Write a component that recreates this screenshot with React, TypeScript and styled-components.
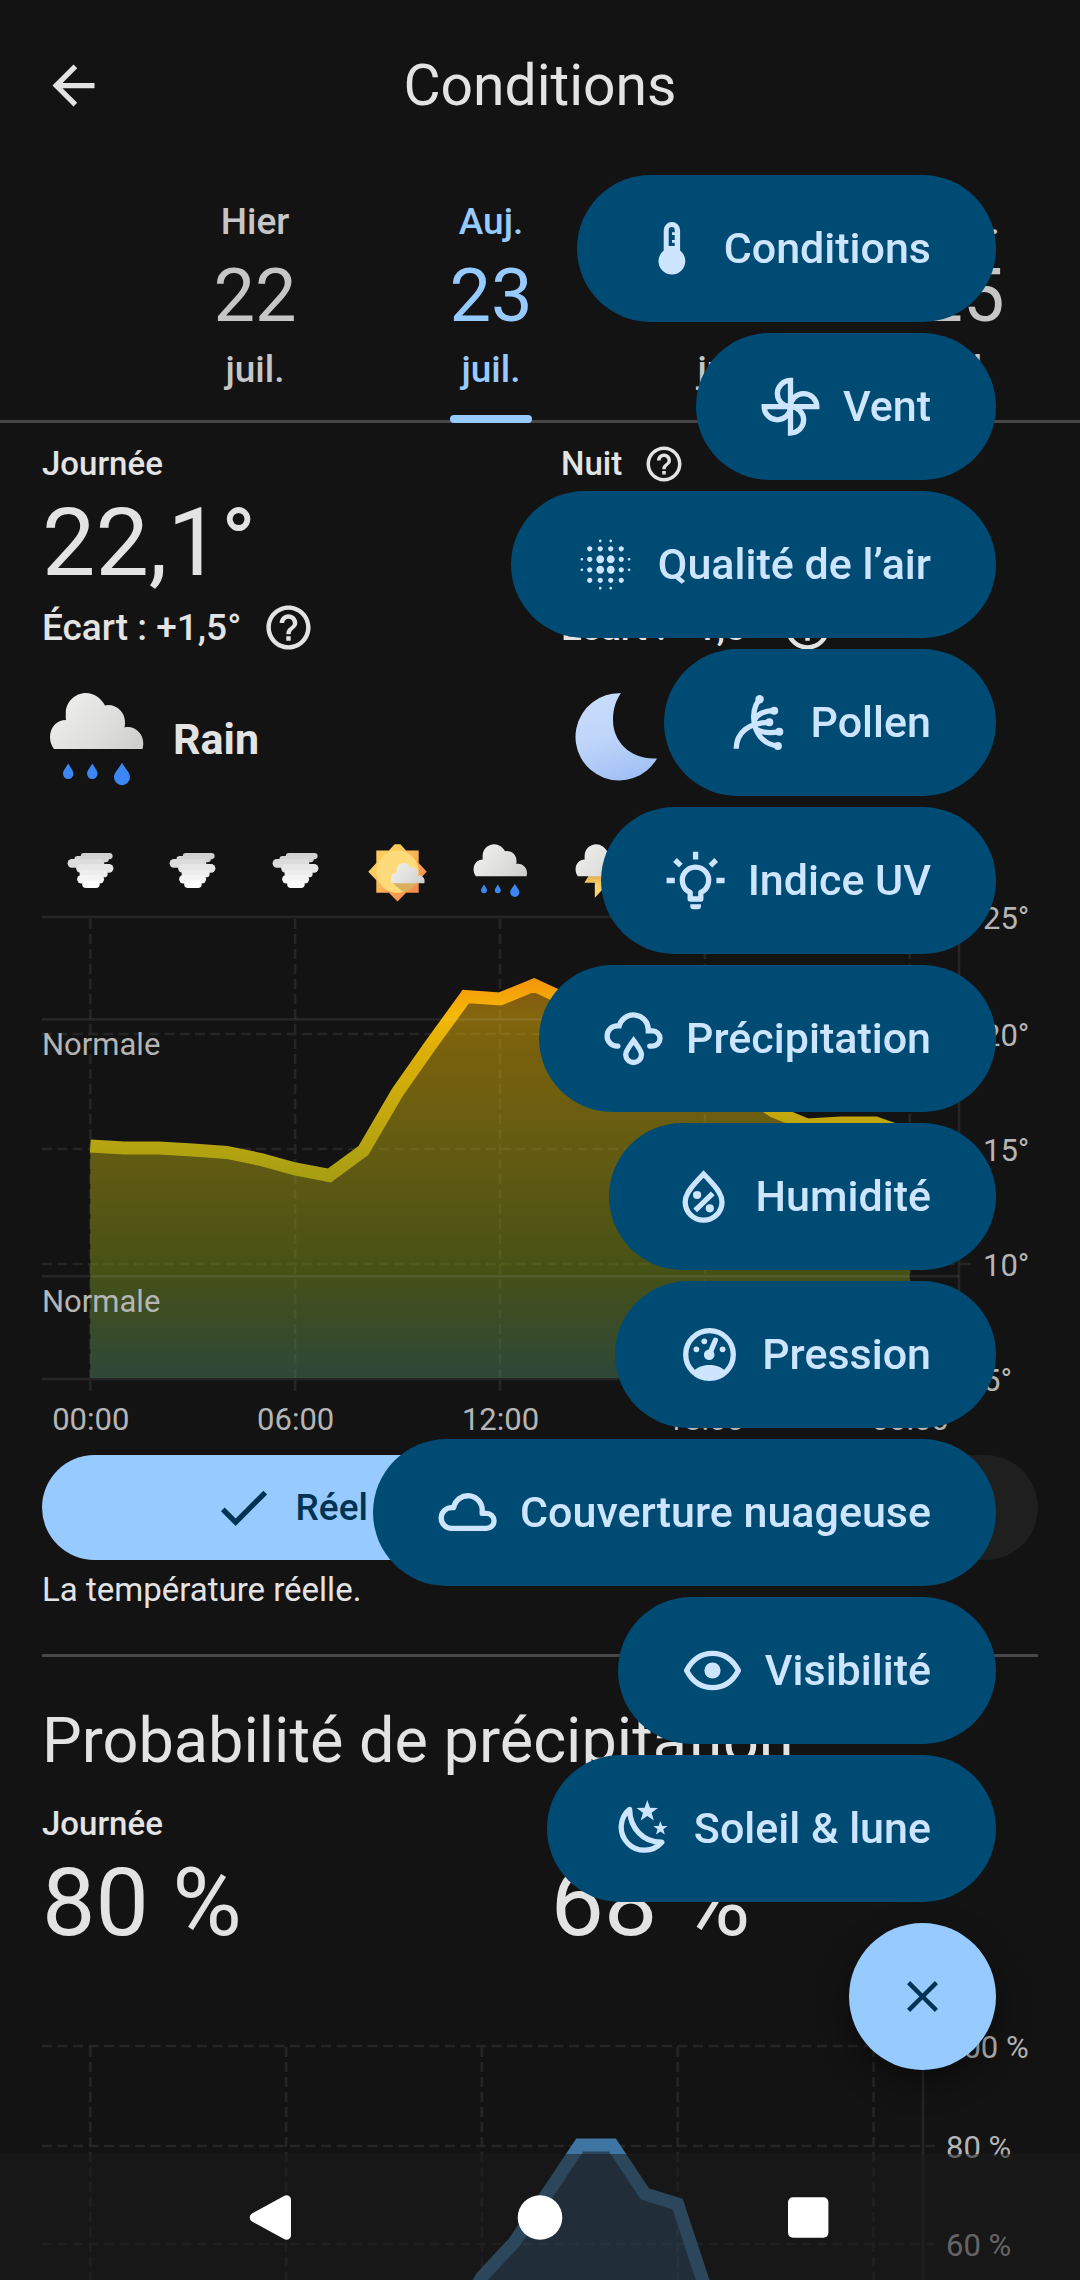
import React, { useState } from "react";
import styled, { createGlobalStyle } from "styled-components";
import { MdArrowBack, MdBlurOn, MdCheck, MdClose, MdHelpOutline } from "react-icons/md";

const color = {
  surface: "#131313",
  surfaceHigh: "#1f1f1f",
  text: "#e3e3e3",
  muted: "#c6c6c6",
  axis: "#b5b5b5",
  outline: "#474747",
  primary: "#97caff",
  onPrimary: "#003352",
  container: "#004b74",
  onContainer: "#cde5ff",
};

const GlobalStyle = createGlobalStyle`
  * { box-sizing: border-box; }
  body {
    margin: 0;
    background: ${color.surface};
    color: ${color.text};
    font-family: Roboto, "Noto Sans", sans-serif;
  }
  button { font-family: inherit; border: 0; padding: 0; background: none; color: inherit; cursor: pointer; }
  h1, h2, p { margin: 0; font-weight: 400; }
`;

const Screen = styled.div`
  display: flex;
  flex-direction: column;
  height: 100vh;
  overflow: hidden;
`;

const TopBar = styled.header`
  display: grid;
  grid-template-columns: 63px 1fr 63px;
  align-items: center;
  flex: none;
  height: 171px;
  padding: 0 42px;
`;

const IconButton = styled.button`
  display: flex;
  font-size: 63px;
`;

const Title = styled.h1`
  text-align: center;
  font-size: 57px;
  line-height: 74px;
`;

const Tabs = styled.nav`
  display: flex;
  flex: none;
  overflow: hidden;
  padding-left: 137px;
  box-shadow: inset 0 -3px 0 ${color.outline};
`;

const Tab = styled.button<{ $active: boolean }>`
  position: relative;
  display: flex;
  flex-direction: column;
  align-items: center;
  flex: 0 0 236px;
  padding: 24px 0 27px;
  color: ${(p) => (p.$active ? color.primary : color.muted)};
`;

const TabLabel = styled.span`
  font-size: 37px;
  font-weight: 500;
  line-height: 53px;
`;

const TabDay = styled.span`
  font-size: 74px;
  line-height: 95px;
`;

const Indicator = styled.span`
  position: absolute;
  bottom: 0;
  width: 82px;
  height: 8px;
  border-radius: 4px;
  background: ${color.primary};
`;

const Scroll = styled.main`
  flex: 1;
  min-height: 0;
  overflow-y: auto;
  scrollbar-width: none;
  padding: 20px 42px 0;
`;

const Halves = styled.div<{ $gap: number }>`
  display: grid;
  grid-template-columns: 1fr 1fr;
  column-gap: ${(p) => p.$gap}px;
`;

const LabelRow = styled.div`
  display: flex;
  align-items: center;
  gap: 21px;
  font-size: 33px;
  font-weight: 500;
  line-height: 42px;
`;

const BigValue = styled.p`
  font-size: 95px;
  line-height: 116px;
`;

const Departure = styled.div`
  display: flex;
  align-items: center;
  gap: 21px;
  font-size: 37px;
  font-weight: 500;
  line-height: 53px;
`;

const HelpButton = styled.button<{ $size: number }>`
  display: flex;
  font-size: ${(p) => p.$size}px;
`;

const Summary = styled.div`
  display: flex;
  align-items: center;
  gap: 21px;
  margin-top: 30px;
  font-size: 43px;
  font-weight: 700;
`;

const HourIcons = styled.div`
  display: flex;
  justify-content: space-between;
  margin-top: 45px;
  padding: 0 97px 0 17px;
`;

const Chart = styled.svg`
  display: block;
  width: 100%;
  height: auto;
  text {
    fill: ${color.axis};
    font-size: 31px;
  }
`;

const Segments = styled.div`
  display: flex;
  gap: 5px;
  margin: 15px 0 9px;
`;

const Segment = styled.button<{ $active: boolean; $side: "left" | "right" }>`
  display: flex;
  align-items: center;
  justify-content: center;
  gap: 21px;
  flex: 1;
  height: 105px;
  border-radius: ${(p) => (p.$side === "left" ? "53px 21px 21px 53px" : "21px 53px 53px 21px")};
  background: ${(p) => (p.$active ? color.primary : color.surfaceHigh)};
  color: ${(p) => (p.$active ? color.onPrimary : color.muted)};
  font-size: 37px;
  font-weight: 500;
  line-height: 53px;
  svg { font-size: 63px; }
`;

const Note = styled.p`
  font-size: 33px;
  line-height: 42px;
`;

const Divider = styled.hr`
  height: 3px;
  margin: 43px 0 42px;
  border: 0;
  background: ${color.outline};
`;

const SectionTitle = styled.h2`
  margin-bottom: 20px;
  font-size: 63px;
  line-height: 84px;
`;

const FabMenu = styled.div`
  position: fixed;
  right: 84px;
  bottom: 210px;
  display: flex;
  flex-direction: column;
  align-items: flex-end;
  gap: 11px;
  z-index: 3;
`;

const MenuItem = styled.button`
  display: flex;
  align-items: center;
  gap: 21px;
  height: 147px;
  padding: 0 65px 0 63px;
  border-radius: 74px;
  background: ${color.container};
  color: ${color.onContainer};
  font-size: 43px;
  font-weight: 500;
  line-height: 63px;
  white-space: nowrap;
  svg { width: 63px; height: 63px; }
`;

const Fab = styled.button`
  display: flex;
  align-items: center;
  justify-content: center;
  width: 147px;
  height: 147px;
  margin-top: 10px;
  border-radius: 50%;
  background: ${color.primary};
  color: ${color.onPrimary};
  font-size: 53px;
  box-shadow: 0 12px 32px rgba(0, 0, 0, 0.4);
`;

const SystemBar = styled.footer`
  position: fixed;
  left: 0;
  right: 0;
  bottom: 0;
  display: flex;
  justify-content: center;
  gap: 142px;
  height: 126px;
  background: rgba(27, 27, 27, 0.52);
  z-index: 2;
`;

const SystemButton = styled.button`
  display: flex;
  align-items: center;
  justify-content: center;
  width: 126px;
  svg { width: 63px; height: 63px; fill: #fff; }
`;

/* ---------- menu icons, drawn on a 63 × 63 grid ---------- */

const Line = ({ children }: { children: React.ReactNode }) => (
  <svg viewBox="0 0 63 63" fill="none" stroke="currentColor" strokeWidth="5.3" aria-hidden="true">
    {children}
  </svg>
);

const Thermometer = () => (
  <svg viewBox="0 0 63 63" fill="currentColor" aria-hidden="true">
    <path
      fillRule="evenodd"
      d="M31.9 5A8.2 8.2 0 0 0 23.7 13.2V33.6A13.4 13.4 0 1 0 40.1 33.6V13.2A8.2 8.2 0 0 0 31.9 5ZM31.7 10A3 3 0 0 1 34.7 13V15.3H32V18H34.7V23H32V25.8H34.7V29H28.7V13A3 3 0 0 1 31.7 10Z"
    />
  </svg>
);

const Pinwheel = () => (
  <Line>
    {[0, 90, 180, 270].map((a) => (
      <path key={a} transform={`rotate(${a} 31.5 31.7)`} d="M31.5 31.7V5.4A13.1 13.1 0 0 0 31.5 31.7" />
    ))}
  </Line>
);

const Pollen = () => (
  <Line>
    <path d="M9.2 57.8C9.5 41 22 31.5 42.3 31.3M32.6 7.7Q24.5 19 27.3 33Q32 52.5 50.9 55M27.5 29Q32 20 47.4 19.7M29 38Q38 43.5 52.3 40.7" />
    <g fill="currentColor" stroke="none">
      <circle cx="32.6" cy="8.2" r="4.2" />
      <circle cx="47.2" cy="19.8" r="4" />
      <circle cx="42.3" cy="31.3" r="4" />
      <circle cx="52.3" cy="40.7" r="4" />
      <circle cx="50.9" cy="55" r="4" />
    </g>
  </Line>
);

const Bulb = () => (
  <Line>
    <path d="M26.2 43.4A13.2 13.2 0 1 1 36.8 43.4V50H26.2Z" strokeLinejoin="round" />
    <path d="M31.6 2.7V10.5M2.6 31.5H10.8M52.4 31.5H60.6M11 11L16.8 16.6M52.2 11L46.4 16.6" />
    <path d="M26.3 55.3H37V57.3A3 3 0 0 1 34 60.3H29.3A3 3 0 0 1 26.3 57.3Z" fill="currentColor" stroke="none" />
  </Line>
);

const RainCloud = () => (
  <Line>
    <path
      strokeLinecap="round"
      d="M15.9 39.1H15.2A10.1 10.1 0 0 1 15.2 18.9H17.2A14.8 14.8 0 0 1 46.3 22.5V23.9H50.4A7.6 7.6 0 0 1 50.4 39.1H47.8"
    />
    <path d="M31.6 33.6C27 40 23.7 43.6 23.7 47.6A7.9 7.9 0 0 0 39.5 47.6C39.5 43.6 36.2 40 31.6 33.6Z" />
  </Line>
);

const Humidity = () => (
  <Line>
    <path d="M31.6 9C20.5 20.5 13.2 28.5 13.2 37A18.4 18.2 0 0 0 50 37C50 28.5 42.7 20.5 31.6 9Z" />
    <path d="M23.2 45.3L40.8 28.3" />
    <circle cx="25.1" cy="30" r="4.1" fill="currentColor" stroke="none" />
    <circle cx="37.8" cy="43.3" r="4.1" fill="currentColor" stroke="none" />
  </Line>
);

const Gauge = () => (
  <Line>
    <circle cx="31.5" cy="31.5" r="23.8" />
    <path d="M31.4 31.5L37.4 17.3" strokeLinecap="round" />
    <g fill="currentColor" stroke="none">
      <circle cx="31.2" cy="31.8" r="5.3" />
      <circle cx="26.3" cy="18.3" r="2.9" />
      <circle cx="18.4" cy="26.3" r="2.9" />
      <circle cx="44.6" cy="26.3" r="2.9" />
      <path d="M15 49C21.5 39.7 41.5 39.7 48 49A24 24 0 0 1 15 49Z" />
    </g>
  </Line>
);

const Cloud = () => (
  <Line>
    <path
      strokeLinejoin="round"
      d="M15.6 47.4A10.4 10.4 0 0 1 15.6 26.6H17.7A14.4 14.4 0 0 1 46.2 30.6V32.4H50.6A7.5 7.5 0 0 1 50.6 47.4Z"
    />
  </Line>
);

const Eye = () => (
  <Line>
    <path strokeLinejoin="round" d="M5.6 31.5Q14.5 14.4 31.5 14.4Q48.5 14.4 57.4 31.5Q48.5 48.6 31.5 48.6Q14.5 48.6 5.6 31.5Z" />
    <circle cx="31.5" cy="31.5" r="8.1" fill="currentColor" stroke="none" />
  </Line>
);

const star = (cx: number, cy: number, r: number) =>
  Array.from({ length: 10 }, (_, i) => {
    const a = (Math.PI / 5) * i - Math.PI / 2;
    const d = i % 2 ? r * 0.4 : r;
    return `${(cx + d * Math.cos(a)).toFixed(1)},${(cy + d * Math.sin(a)).toFixed(1)}`;
  }).join(" ");

const MoonStars = () => (
  <Line>
    <path strokeLinejoin="round" d="M19.6 12.3A23.1 23.1 0 1 0 51.8 45.2C33 45.5 20 31 19.6 12.3Z" />
    <polygon points={star(37.3, 14.4, 11.3)} fill="currentColor" stroke="none" />
    <polygon points={star(50.4, 31.4, 7.5)} fill="currentColor" stroke="none" />
  </Line>
);

/* ---------- weather pictures, drawn on a 110 × 110 grid ---------- */

const CLOUD =
  "M12 65C9 61 8 57 8 53C8 43 15 36 24 36C23.6 34 23.8 31 23.8 29C23.8 18 33 9 44 9C52 9 59 14 63 21.5C64 21.2 65 21 66 21C76 21 83 29 83 38C83 40 83 42 82.5 43.5C84 43 85 43 86 43C94 43 101.3 50 101.3 59C101.3 61 101 63 100.5 65Z";

const DefsSvg = styled.svg`
  display: block;
  flex: none;
`;

const Defs = () => (
  <DefsSvg width="0" height="0" aria-hidden="true">
    <defs>
      <linearGradient id="cloud" x1="0" y1="0.3" x2="1" y2="0.8">
        <stop offset="0" stopColor="#eeeeed" />
        <stop offset="0.6" stopColor="#dededc" />
        <stop offset="1" stopColor="#cfcfcd" />
      </linearGradient>
      <linearGradient id="moon" x1="0.2" y1="0" x2="0.5" y2="1">
        <stop offset="0" stopColor="#c9dcfb" />
        <stop offset="0.5" stopColor="#bfd6fa" />
        <stop offset="1" stopColor="#a3c1f6" />
      </linearGradient>
      <linearGradient id="rays" x1="0" y1="0" x2="1" y2="1">
        <stop offset="0.3" stopColor="#fccb5c" />
        <stop offset="0.8" stopColor="#f68d4b" />
      </linearGradient>
      <linearGradient id="bolt" x1="0" y1="0" x2="0" y2="1">
        <stop offset="0" stopColor="#e0b050" />
        <stop offset="0.5" stopColor="#ffd56c" />
      </linearGradient>
    </defs>
  </DefsSvg>
);

const drop = (x: number, top: number, w: number, h: number) =>
  `M${x} ${top}C${x - w * 0.3} ${top + h * 0.35} ${x - w / 2} ${top + h * 0.45} ${x - w / 2} ${top + h - w / 2}A${w / 2} ${w / 2} 0 0 0 ${x + w / 2} ${top + h - w / 2}C${x + w / 2} ${top + h * 0.45} ${x + w * 0.3} ${top + h * 0.35} ${x} ${top}Z`;

type Size = { size: number };

const RainPicture = ({ size }: Size) => (
  <svg width={size} height={size} viewBox="0 0 110 110" role="img" aria-label="Pluie">
    <path d={CLOUD} fill="url(#cloud)" />
    <path d={drop(26.2, 79.5, 10.4, 15.4) + drop(50.3, 79.5, 10.4, 15.4) + drop(80, 78.7, 16, 22.5)} fill="#3d87f5" />
  </svg>
);

const MoonPicture = ({ size }: Size) => (
  <svg width={size} height={size} viewBox="0 0 110 110" role="img" aria-label="Nuit claire">
    <path d="M60 9.3A43.6 43.6 0 1 0 96 74.4C71 76 52 59 52 36C52 25 55 16 60 9.3Z" fill="url(#moon)" />
  </svg>
);

const TornadoPicture = ({ size }: Size) => (
  <svg width={size} height={size} viewBox="0 0 110 110" role="img" aria-label="Vent">
    <rect x="38" y="24.4" width="55.6" height="11" rx="5.5" fill="#cfcfcf" />
    <rect x="27" y="29.5" width="60" height="11" rx="5.5" fill="#d3d3d3" />
    <rect x="15" y="35" width="64" height="15" rx="7.5" fill="#dcdcdc" />
    <rect x="30" y="43.5" width="65" height="15.3" rx="7.6" fill="#e6e6e6" />
    <rect x="36" y="54" width="49" height="13" rx="6.5" fill="#eeeeee" />
    <rect x="31.7" y="63" width="47" height="14.5" rx="7.2" fill="#f4f4f4" />
    <rect x="40.5" y="72.5" width="30.5" height="13" rx="6.5" fill="#fcfcfc" />
  </svg>
);

const SunPicture = ({ size }: Size) => (
  <svg width={size} height={size} viewBox="0 0 110 110" role="img" aria-label="Éclaircies">
    <path d="M18 20H40L50 9H60L70 20H92V42L106 57L92 72V94H70L55 109L40 94H18V72L4 57L18 42Z" fill="url(#rays)" />
    <circle cx="55" cy="57" r="37" fill="#fddb7b" />
    <path d="M46 77H88Q80 89 66 93Z" fill="#d9b05e" />
    <path d={CLOUD} transform="translate(38.5 36.3) scale(0.63)" fill="url(#cloud)" />
  </svg>
);

const StormPicture = ({ size }: Size) => (
  <svg width={size} height={size} viewBox="0 0 110 110" role="img" aria-label="Orage">
    <polygon points="30.8,64 60,64 55,74 68,74 41.6,102.5 41.6,76.5 23.4,76.5" fill="url(#bolt)" />
    <path d={CLOUD} fill="url(#cloud)" />
  </svg>
);

/* ---------- data ---------- */

const DAYS = [
  { name: "Hier", day: "22" },
  { name: "Auj.", day: "23" },
  { name: "Jeu.", day: "24" },
  { name: "Ven.", day: "25" },
];

const HOURS = [
  TornadoPicture,
  TornadoPicture,
  TornadoPicture,
  SunPicture,
  RainPicture,
  StormPicture,
  RainPicture,
  RainPicture,
  MoonPicture,
];

const MENU = [
  { label: "Conditions", icon: <Thermometer /> },
  { label: "Vent", icon: <Pinwheel /> },
  { label: "Qualité de l’air", icon: <MdBlurOn /> },
  { label: "Pollen", icon: <Pollen /> },
  { label: "Indice UV", icon: <Bulb /> },
  { label: "Précipitation", icon: <RainCloud /> },
  { label: "Humidité", icon: <Humidity /> },
  { label: "Pression", icon: <Gauge /> },
  { label: "Couverture nuageuse", icon: <Cloud /> },
  { label: "Visibilité", icon: <Eye /> },
  { label: "Soleil & lune", icon: <MoonStars /> },
];

// Hourly heights of the temperature curve, in chart units.
const TEMPERATURE = [
  244, 246, 246, 248, 250.5, 257.5, 267, 273.5, 248.5, 190, 141.5, 94.6, 97, 83, 99, 108, 118, 133, 153, 186, 209, 223,
  221, 221, 233,
];

// Hourly heights of the rain probability curve, in chart units.
const RAIN = [
  576, 576, 576, 576, 576, 576, 576, 560, 520, 480, 430, 372, 316, 281, 233, 184, 184, 233, 243, 342, 400, 430, 450, 470,
  480,
];

const points = (values: number[], step: number) =>
  values.map((v, i) => `${(48.3 + i * step).toFixed(1)},${v}`).join(" ");

const TemperatureChart = () => {
  const line = points(TEMPERATURE, 34.14);
  const hours = ["00:00", "06:00", "12:00", "18:00", "00:00"];
  const degrees = [
    { y: 15, label: "25°" },
    { y: 132, label: "20°" },
    { y: 247, label: "15°" },
    { y: 362, label: "10°" },
    { y: 477, label: "5°" },
  ];
  return (
    <Chart viewBox="0 0 996 538" role="img" aria-label="Température au fil de la journée">
      <defs>
        <linearGradient id="heat" gradientUnits="userSpaceOnUse" x1="0" y1="15" x2="0" y2="477">
          <stop offset="0.14" stopColor="#f5970b" />
          <stop offset="0.21" stopColor="#f5b807" />
          <stop offset="0.28" stopColor="#e0af08" />
          <stop offset="0.38" stopColor="#ccab0b" />
          <stop offset="0.5" stopColor="#b4a310" />
          <stop offset="0.56" stopColor="#a99f13" />
          <stop offset="0.75" stopColor="#7d9016" />
          <stop offset="1" stopColor="#477b5f" />
        </linearGradient>
      </defs>
      <g stroke="#252525" strokeWidth="2.6">
        {degrees.map((d, i) => (
          <g key={d.label}>
            <path d={`M0 ${d.y}H917`} strokeDasharray={i % 4 ? "10 5.3" : undefined} />
            <path d={`M917 ${d.y}H929`} />
          </g>
        ))}
        {hours.map((_, i) => (
          <g key={i}>
            <path d={`M${48.3 + i * 204.85} 17V477`} strokeDasharray="10 5" />
            <path d={`M${48.3 + i * 204.85} 477V489`} />
          </g>
        ))}
        <path d="M917 15V477" />
      </g>
      <polygon points={`48.3,476 ${line} 867.7,476`} fill="url(#heat)" opacity="0.5" />
      <polyline points={line} fill="none" stroke="url(#heat)" strokeWidth="13" />
      <path d="M0 117.4H917M0 374.2H917" stroke="#ffffff" strokeOpacity="0.08" strokeWidth="2.6" />
      <text x="0" y="153">Normale</text>
      <text x="0" y="410">Normale</text>
      {degrees.map((d) => (
        <text key={d.label} x="941" y={d.y + 12}>{d.label}</text>
      ))}
      {hours.map((h, i) => (
        <text key={i} x={48.8 + i * 204.85} y="528" textAnchor="middle">{h}</text>
      ))}
    </Chart>
  );
};

const RainChart = () => {
  const line = points(RAIN, 32.63);
  const marks = [
    { y: 85, label: "100 %" },
    { y: 185, label: "80 %" },
    { y: 283, label: "60 %" },
    { y: 381, label: "40 %" },
    { y: 479, label: "20 %" },
  ];
  return (
    <Chart viewBox="0 0 996 640" role="img" aria-label="Probabilité de précipitation au fil de la journée">
      <g stroke="#252525" strokeWidth="2.6">
        {marks.map((m) => (
          <path key={m.label} d={`M0 ${m.y}H893`} strokeDasharray="10 5.5" />
        ))}
        {[0, 1, 2, 3, 4].map((i) => (
          <path key={i} d={`M${48.3 + i * 195.8} 86V577`} strokeDasharray="10 5" />
        ))}
        <path d="M881 85V577H0" fill="none" />
      </g>
      <polygon points={`48.3,577 ${line} 831.4,577`} fill="#3f75a3" opacity="0.5" />
      <polyline points={line} fill="none" stroke="#3f75a3" strokeWidth="13" />
      {marks.map((m) => (
        <text key={m.label} x="904" y={m.y + 12}>{m.label}</text>
      ))}
    </Chart>
  );
};

const Half = ({
  label,
  help,
  value,
  departure,
  children,
}: {
  label: string;
  help?: boolean;
  value: string;
  departure?: string;
  children?: React.ReactNode;
}) => (
  <section>
    <LabelRow>
      {label}
      {help && (
        <HelpButton $size={42} aria-label="Aide">
          <MdHelpOutline />
        </HelpButton>
      )}
    </LabelRow>
    <BigValue>{value}</BigValue>
    {departure && (
      <Departure>
        {departure}
        <HelpButton $size={53} aria-label="Aide">
          <MdHelpOutline />
        </HelpButton>
      </Departure>
    )}
    {children}
  </section>
);

export default function App() {
  const [day, setDay] = useState(1);
  const [real, setReal] = useState(true);
  const [open, setOpen] = useState(true);

  return (
    <Screen>
      <GlobalStyle />
      <Defs />
      <TopBar>
        <IconButton aria-label="Retour">
          <MdArrowBack />
        </IconButton>
        <Title>Conditions</Title>
      </TopBar>
      <Tabs>
        {DAYS.map((d, i) => (
          <Tab key={d.day} $active={i === day} onClick={() => setDay(i)}>
            <TabLabel>{d.name}</TabLabel>
            <TabDay>{d.day}</TabDay>
            <TabLabel>juil.</TabLabel>
            {i === day && <Indicator />}
          </Tab>
        ))}
      </Tabs>
      <Scroll>
        <Halves $gap={42}>
          <Half label="Journée" value="22,1°" departure="Écart : +1,5°">
            <Summary>
              <RainPicture size={110} />
              Rain
            </Summary>
          </Half>
          <Half label="Nuit" help value="14,1°" departure="Écart : +1,5°">
            <Summary>
              <MoonPicture size={110} />
              Clear
            </Summary>
          </Half>
        </Halves>
        <HourIcons>
          {HOURS.map((Picture, i) => (
            <Picture key={i} size={63} />
          ))}
        </HourIcons>
        <TemperatureChart />
        <Segments>
          <Segment $side="left" $active={real} aria-pressed={real} onClick={() => setReal(true)}>
            {real && <MdCheck />}
            Réel
          </Segment>
          <Segment $side="right" $active={!real} aria-pressed={!real} onClick={() => setReal(false)}>
            {!real && <MdCheck />}
            Ressenti
          </Segment>
        </Segments>
        <Note>La température réelle.</Note>
        <Divider />
        <SectionTitle>Probabilité de précipitation</SectionTitle>
        <Halves $gap={21}>
          <Half label="Journée" value="80 %" />
          <Half label="Nuit" value="68 %" />
        </Halves>
        <RainChart />
      </Scroll>
      <FabMenu>
        {open &&
          MENU.map((m) => (
            <MenuItem key={m.label}>
              {m.icon}
              {m.label}
            </MenuItem>
          ))}
        <Fab aria-label={open ? "Fermer le menu" : "Ouvrir le menu"} onClick={() => setOpen(!open)}>
          <MdClose />
        </Fab>
      </FabMenu>
      <SystemBar>
        <SystemButton aria-label="Précédent">
          <svg viewBox="0 0 63 63">
            <path d="M11 27.5L43.5 9.8A4.5 4.5 0 0 1 50 14V49A4.5 4.5 0 0 1 43.5 53.2L11 35.5A4.6 4.6 0 0 1 11 27.5Z" />
          </svg>
        </SystemButton>
        <SystemButton aria-label="Accueil">
          <svg viewBox="0 0 63 63">
            <circle cx="31" cy="31.5" r="22.3" />
          </svg>
        </SystemButton>
        <SystemButton aria-label="Applications récentes">
          <svg viewBox="0 0 63 63">
            <rect x="11" y="11.3" width="40.4" height="40.4" rx="5" />
          </svg>
        </SystemButton>
      </SystemBar>
    </Screen>
  );
}
